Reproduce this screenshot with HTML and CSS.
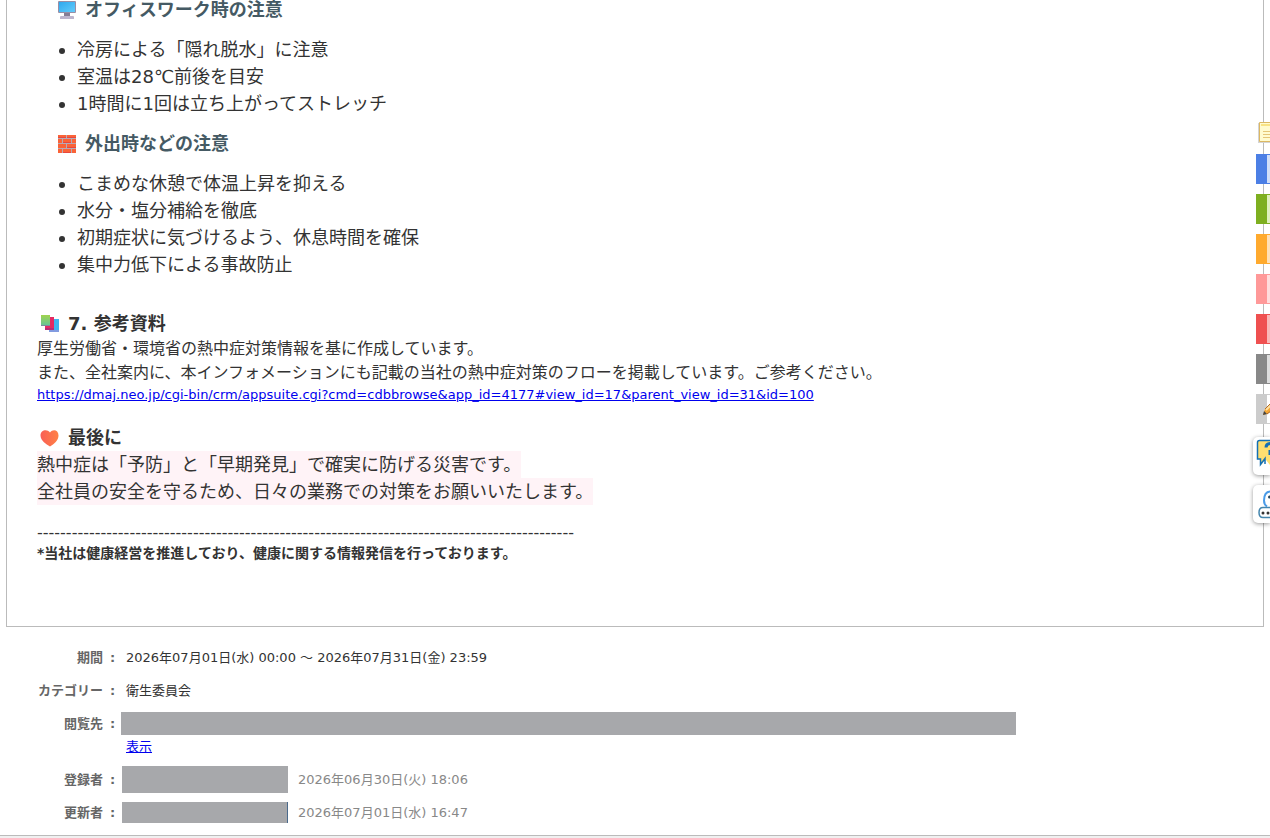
FILE: index.html
```html
<!DOCTYPE html>
<html lang="ja">
<head>
    <meta charset="UTF-8">
    <meta name="viewport" content="width=device-width, initial-scale=1.0">
    <title>熱中症対策</title>
    <link rel="stylesheet" href="styles.css">
</head>
<body>
    <main>
        <article class="message">
            <section class="scene">
                <h3>
                    <svg class="emoji" viewBox="0 0 20 20" aria-hidden="true">
                        <defs>
                            <linearGradient id="screen" x1="0" y1="0" x2="1" y2="1"><stop offset="0" stop-color="#2fa8ee"/><stop offset="1" stop-color="#62cbfa"/></linearGradient>
                        </defs>
                        <path d="M7 13h6v4H7z" fill="#857d95"/>
                        <path d="M3 17q0-1 1-1h12q1 0 1 1v2H3z" fill="#bdb5cd"/>
                        <rect x="1" y="1" width="18" height="12" rx="1" fill="#998ea5"/>
                        <rect x="2" y="2" width="16" height="10" fill="url(#screen)"/>
                    </svg>
                    オフィスワーク時の注意
                </h3>
                <ul>
                    <li>冷房による「隠れ脱水」に注意</li>
                    <li>室温は28℃前後を目安</li>
                    <li>1時間に1回は立ち上がってストレッチ</li>
                </ul>
            </section>
            <section class="scene">
                <h3>
                    <svg class="emoji" viewBox="0 0 20 20" aria-hidden="true">
                        <rect x="1" y="1" width="18" height="18" fill="#b9a9b4"/>
                        <path d="M1 1h8v3H1zM10 1h9v3h-9zM1 5h4v4H1zM6 5h8v4H6zM15 5h4v4h-4zM1 10h8v4H1zM10 10h9v4h-9zM1 15h4v4H1zM6 15h8v4H6zM15 15h4v4h-4z" fill="#fa6338"/>
                        <path d="M1 3h8v1H1zM10 3h9v1h-9zM6 8h8v1H6zM10 13h9v1h-9zM6 18h8v1H6z" fill="#e9473d"/>
                    </svg>
                    外出時などの注意
                </h3>
                <ul>
                    <li>こまめな休憩で体温上昇を抑える</li>
                    <li>水分・塩分補給を徹底</li>
                    <li>初期症状に気づけるよう、休息時間を確保</li>
                    <li>集中力低下による事故防止</li>
                </ul>
            </section>

            <section class="reference">
                <h2>
                    <svg class="emoji" viewBox="0 0 20 20" aria-hidden="true">
                        <defs>
                            <linearGradient id="green" x1="0" y1="0" x2="0" y2="1"><stop offset="0" stop-color="#a0d34d"/><stop offset="1" stop-color="#62c59b"/></linearGradient>
                        </defs>
                        <path d="M9 5h10v13H9z" fill="#3fb4ef"/>
                        <path d="M9 16h10v2H9z" fill="#829be0"/>
                        <path d="M5 3h9v13H5z" fill="#e52a62"/>
                        <path d="M5 14h9v2H5z" fill="#b72c76"/>
                        <path d="M1 1h9v11H1z" fill="url(#green)"/>
                        <path d="M1 11h9v1H1z" fill="#7d899f"/>
                    </svg>
                    7. 参考資料
                </h2>
                <p>厚生労働省・環境省の熱中症対策情報を基に作成しています。<br>
                また、全社案内に、本インフォメーションにも記載の当社の熱中症対策のフローを掲載しています。ご参考ください。</p>
                <a class="source" href="https://dmaj.neo.jp/cgi-bin/crm/appsuite.cgi?cmd=cdbbrowse&amp;app_id=4177#view_id=17&amp;parent_view_id=31&amp;id=100">https://dmaj.neo.jp/cgi-bin/crm/appsuite.cgi?cmd=cdbbrowse&amp;app_id=4177#view_id=17&amp;parent_view_id=31&amp;id=100</a>
            </section>

            <section class="closing">
                <h2>
                    <svg class="emoji" viewBox="0 0 20 20" aria-hidden="true">
                        <defs>
                            <linearGradient id="heart" x1="0" y1="0" x2="1" y2="0"><stop offset="0" stop-color="#f95f56"/><stop offset="1" stop-color="#ff8145"/></linearGradient>
                        </defs>
                        <path d="M10 18.500C6 16 .5 12.500.5 7.500.5 2 7 .5 10 4.500 13 .5 18.500 2 18.500 7.500c0 5-4.500 8.500-8.500 11z" fill="url(#heart)"/>
                    </svg>
                    最後に
                </h2>
                <p class="marked">熱中症は「予防」と「早期発見」で確実に防げる災害です。</p>
                <p class="marked">全社員の安全を守るため、日々の業務での対策をお願いいたします。</p>
            </section>

            <footer>
                <p class="dashes">---------------------------------------------------------------------------------------------</p>
                <p class="note">*当社は健康経営を推進しており、健康に関する情報発信を行っております。</p>
            </footer>
        </article>

        <table class="info">
            <tr>
                <th scope="row">期間</th>
                <td class="colon">:</td>
                <td>2026年07月01日(水) 00:00 ～ 2026年07月31日(金) 23:59</td>
            </tr>
            <tr>
                <th scope="row">カテゴリー</th>
                <td class="colon">:</td>
                <td>衛生委員会</td>
            </tr>
            <tr>
                <th scope="row">閲覧先</th>
                <td class="colon">:</td>
                <td>
                    <div class="mask mask-wide"></div>
                    <a href="#">表示</a>
                </td>
            </tr>
            <tr>
                <th scope="row">登録者</th>
                <td class="colon">:</td>
                <td><div class="person"><span class="mask"></span><time>2026年06月30日(火) 18:06</time></div></td>
            </tr>
            <tr>
                <th scope="row">更新者</th>
                <td class="colon">:</td>
                <td><div class="person"><span class="mask mask-low"></span><time>2026年07月01日(水) 16:47</time></div></td>
            </tr>
        </table>
    </main>

    <aside class="tools">
        <button class="memo" type="button" aria-label="メモ">
            <svg width="12" height="24" viewBox="0 0 12 24">
                <path d="M0 3h12v20H0z" fill="#d4d4d4"/>
                <path d="M1.500 2.500H13v19H1.500z" fill="#fffbd0" stroke="#dcb863"/>
                <path d="M3 4h9v2H3z" fill="#f8e385"/>
                <path d="M5 11.500h7M5 14.500h7M5 17.500h7" stroke="#e5c678"/>
            </svg>
        </button>
        <button class="tab blue" type="button" aria-label="青"></button>
        <button class="tab green" type="button" aria-label="緑"></button>
        <button class="tab orange" type="button" aria-label="橙"></button>
        <button class="tab pink" type="button" aria-label="桃"></button>
        <button class="tab red" type="button" aria-label="赤"></button>
        <button class="tab gray" type="button" aria-label="灰"></button>
        <button class="tab edit" type="button" aria-label="編集">
            <svg width="14" height="30" viewBox="0 0 14 30">
                <path d="M7 21l2-6 6-6v8l-4 3z" fill="#f5a633"/>
                <path d="M9 15l6-6M11 20l4-3" stroke="#a85f1b" fill="none"/>
                <path d="M10 16l5-5" stroke="#ffe0a0" stroke-width="2"/>
                <path d="M7 21l1-4 3 3z" fill="#444"/>
            </svg>
        </button>
        <div class="helpers">
            <button class="bubble" type="button" aria-label="ヘルプ">
                <svg width="17" height="38" viewBox="0 0 17 38">
                    <path d="M6 3.500h14V22h-3v6l-4-5h-1l-4 5v-6H4.500V5q0-1.500 1.500-1.500z" fill="#ffdf70"/>
                    <path d="M17 3.500H6.500q-2 0-2 2V22h3v5.500l4.500-6V27" fill="none" stroke="#1470b5" stroke-width="1.500"/>
                    <path d="M13 10.500q0-4 5-4M17 13v5" fill="none" stroke="#1470b5" stroke-width="3"/>
                </svg>
            </button>
            <button class="bubble" type="button" aria-label="チャット">
                <svg width="17" height="38" viewBox="0 0 17 38">
                    <path d="M18 6.500c-5 0-7 4-7 9q0 4 3 6" fill="#fff" stroke="#4a9be8" stroke-width="2"/>
                    <circle cx="16.500" cy="12" r="1.500" fill="#26455c"/>
                    <path d="M18 22.500H10q-4 0-4 5t4 5h8" fill="#fff" stroke="#4586ae" stroke-width="1.500"/>
                    <circle cx="10" cy="28" r="1.500" fill="#333"/>
                    <circle cx="15" cy="28" r="1.500" fill="#333"/>
                </svg>
            </button>
        </div>
    </aside>
</body>
</html>
```
FILE: styles.css
```css
body {
    margin: 0;
    font-family: "DejaVu Sans", "Noto Sans CJK JP", sans-serif;
    font-size: 13px;
    color: #333;
    background-color: #f0f0f0;
}
main {
    background-color: #fff;
    border-bottom: 1px solid #bbb;
}
h2, h3, p, ul {
    margin: 0;
    padding: 0;
}
h2, h3 {
    display: flex;
    align-items: center;
    gap: 8px;
    font-size: 18px;
}
h2 {
    line-height: 26px;
    padding-left: 3px;
}
h3 {
    line-height: 20px;
    color: #455a64;
}
a {
    color: #0000ee;
}
.emoji {
    width: 20px;
    height: 20px;
    flex: none;
}
.message {
    margin: 0 6px;
    padding: 0 30px 62px;
    border: 1px solid #bbb;
    border-top: none;
}
.scene {
    padding: 0 20px 17px;
}
.scene ul {
    margin-top: 16px;
    padding-left: 20px;
    font-size: 18px;
    line-height: 27px;
}
.reference {
    margin-top: 16px;
}
.reference p {
    font-size: 16px;
    line-height: 24px;
}
.source {
    display: block;
    line-height: 20px;
}
.closing {
    margin-top: 20px;
}
.marked {
    width: fit-content;
    font-size: 18px;
    line-height: 27px;
    background-color: #fff3f7;
}
footer {
    margin-top: 18px;
}
.dashes {
    font-size: 16px;
    line-height: 20px;
}
.note {
    font-size: 14px;
    line-height: 21px;
    font-weight: bold;
}
.info {
    margin: 14px 0 6px;
    border-collapse: collapse;
    line-height: 23px;
}
.info th, .info td {
    padding: 5px 0;
    vertical-align: top;
    text-align: left;
}
.info th {
    width: 103px;
    text-align: right;
    color: #666;
}
.info .colon {
    width: 23px;
    padding-left: 7px;
    box-sizing: border-box;
    font-weight: bold;
    color: #666;
}
.mask {
    width: 166px;
    height: 27px;
    margin-left: -4px;
    background-color: #a7a8ab;
}
.mask-wide {
    width: 895px;
    height: 23px;
    margin-left: -5px;
}
.mask-low {
    width: 165px;
    height: 21px;
    border-right: 1px solid #4a6a8c;
}
.person {
    display: flex;
    align-items: center;
    gap: 10px;
    height: 23px;
    color: #888;
}
.tools {
    position: fixed;
    top: 120px;
    right: 0;
    display: flex;
    flex-direction: column;
    align-items: flex-end;
    gap: 10px;
}
.tools button {
    padding: 0;
    cursor: pointer;
}
.tools svg {
    display: block;
}
.memo {
    height: 24px;
    border: none;
    background: none;
}
.tab {
    width: 14px;
    height: 30px;
    border: 1px solid;
    border-left-width: 11px;
    border-right: none;
}
.blue {
    border-color: #4c7fe5;
    background-color: #d2dff8;
}
.green {
    border-color: #7eaf20;
    background-color: #dff0bd;
}
.orange {
    border-color: #ffaa2e;
    background-color: #ffe0b8;
}
.pink {
    border-color: #ff9999;
    background-color: #ffdddd;
}
.red {
    border-color: #ef5050;
    background-color: #f9b8b8;
}
.gray {
    border-color: #888;
    background-color: #ddd;
}
.edit {
    border-color: #ccc;
    background-color: #fff;
}
.edit svg {
    margin: -1px 0 0 -11px;
}
.helpers {
    display: flex;
    flex-direction: column;
    gap: 10px;
    padding-top: 3px;
}
.bubble {
    width: 17px;
    height: 38px;
    border: none;
    border-radius: 5px 0 0 5px;
    background-color: #fff;
    box-shadow: 0 1px 4px rgba(0, 0, 0, 0.4);
}
```
